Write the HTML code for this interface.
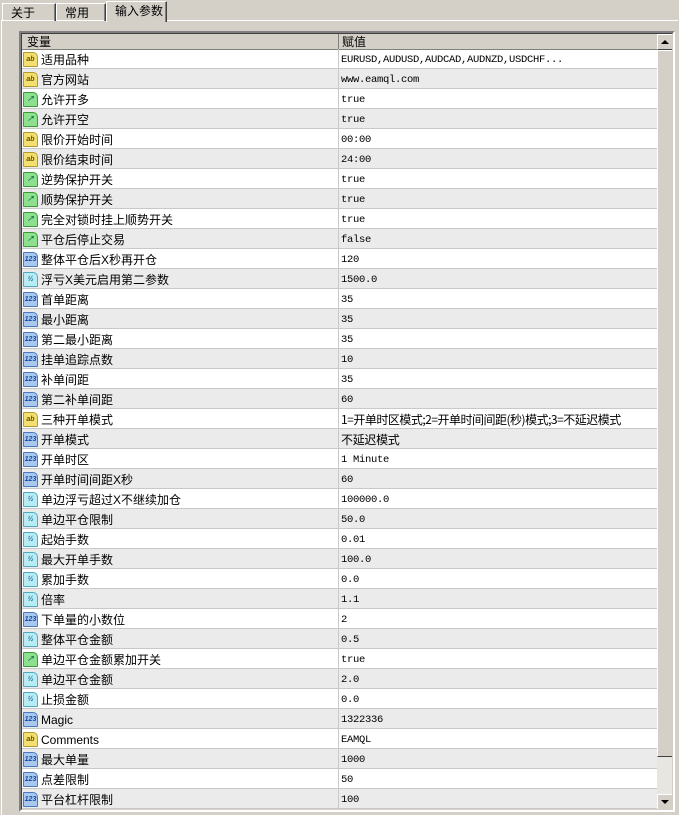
<!DOCTYPE html>
<html><head><meta charset="utf-8"><style>
*{margin:0;padding:0;box-sizing:border-box}
body{width:679px;height:815px;background:#d4d0c8;position:relative;overflow:hidden;font-family:"Liberation Sans","Noto Sans CJK SC",sans-serif}
.tab{position:absolute;top:3px;height:18px;border:1px solid #fff;border-right:1px solid #404040;border-bottom:none;font-size:12px;line-height:18px;padding-left:8px;color:#000;box-shadow:inset -1px 0 #808080}
.panel{position:absolute;left:1px;top:20px;width:677px;height:795px;border-top:1px solid #fff;border-left:1px solid #fff}
.grid{position:absolute;left:19px;top:31px;width:656px;height:781px;border:2px solid;border-color:#808080 #fff #fff #808080;background:#fff;overflow:hidden}
.grid:before{content:"";position:absolute;left:0;top:0;right:0;bottom:0;border:1px solid;border-color:#404040 #d4d0c8 #d4d0c8 #404040;pointer-events:none;z-index:2}
.hdr{position:absolute;left:1px;top:1px;width:635px;height:16px;background:#d4d0c8;font-size:12px;line-height:17px;border-bottom:1px solid #808080}
.hdr span{position:absolute;top:0}
.rows{position:absolute;left:1px;top:16px;width:635px}
.r{height:20px;position:relative;border-bottom:1px solid #c8c8c8;font-size:12px;line-height:22px}
.r:nth-child(even){background:#ebebeb}
.r .n{position:absolute;left:19px;top:0}
.r .v{position:absolute;left:319px;top:0;font-family:"Liberation Mono","Noto Sans CJK SC",monospace;font-size:10.5px;letter-spacing:-0.3px}
.r:after{content:"";position:absolute;left:316px;top:0;width:1px;height:20px;background:#c8c8c8}
.i{position:absolute;left:1px;top:3px;width:15px;height:15px;border:1px solid;font-size:7px;line-height:13px;text-align:center;font-weight:bold;border-radius:1px 5px 1px 1px}
.ab{background:#f4e070;border-color:#b09a30;color:#6a5000}
.b{background:#8ee08e;border-color:#3a9a3a;color:#064}
.n3{background:#a8c8f0;border-color:#4a78b8;color:#1848a0}
.va{background:#b8ecf4;border-color:#50a8c0;color:#1868a0}
.sb{position:absolute;left:636px;top:1px;width:16px;height:777px;background:#e8e6e0}
.btn{position:absolute;left:0;width:16px;height:16px;background:#d4d0c8;border:1px solid;border-color:#fff #404040 #404040 #fff}
.thumb{position:absolute;left:0;top:16px;width:16px;height:707px;background:#d4d0c8;border:1px solid;border-color:#fff #404040 #404040 #fff}
</style></head><body>
<div class="panel"></div>
<div class="tab" style="left:2px;width:54px">关于</div>
<div class="tab" style="left:56px;width:50px">常用</div>
<div class="tab" style="left:106px;top:1px;height:21px;width:61px;background:#d4d0c8">输入参数</div>
<div class="grid">
<div class="hdr"><span style="left:5px">变量</span><span style="left:320px">赋值</span><i style="position:absolute;left:316px;top:0;width:1px;height:15px;background:#808080"></i></div>
<div class="rows">
<div class="r"><i class="i ab">ab</i><span class="n">适用品种</span><span class="v">EURUSD,AUDUSD,AUDCAD,AUDNZD,USDCHF...</span></div>
<div class="r"><i class="i ab">ab</i><span class="n">官方网站</span><span class="v">www.eamql.com</span></div>
<div class="r"><i class="i b">↗</i><span class="n">允许开多</span><span class="v">true</span></div>
<div class="r"><i class="i b">↗</i><span class="n">允许开空</span><span class="v">true</span></div>
<div class="r"><i class="i ab">ab</i><span class="n">限价开始时间</span><span class="v">00:00</span></div>
<div class="r"><i class="i ab">ab</i><span class="n">限价结束时间</span><span class="v">24:00</span></div>
<div class="r"><i class="i b">↗</i><span class="n">逆势保护开关</span><span class="v">true</span></div>
<div class="r"><i class="i b">↗</i><span class="n">顺势保护开关</span><span class="v">true</span></div>
<div class="r"><i class="i b">↗</i><span class="n">完全对锁时挂上顺势开关</span><span class="v">true</span></div>
<div class="r"><i class="i b">↗</i><span class="n">平仓后停止交易</span><span class="v">false</span></div>
<div class="r"><i class="i n3">123</i><span class="n">整体平仓后X秒再开仓</span><span class="v">120</span></div>
<div class="r"><i class="i va">½</i><span class="n">浮亏X美元启用第二参数</span><span class="v">1500.0</span></div>
<div class="r"><i class="i n3">123</i><span class="n">首单距离</span><span class="v">35</span></div>
<div class="r"><i class="i n3">123</i><span class="n">最小距离</span><span class="v">35</span></div>
<div class="r"><i class="i n3">123</i><span class="n">第二最小距离</span><span class="v">35</span></div>
<div class="r"><i class="i n3">123</i><span class="n">挂单追踪点数</span><span class="v">10</span></div>
<div class="r"><i class="i n3">123</i><span class="n">补单间距</span><span class="v">35</span></div>
<div class="r"><i class="i n3">123</i><span class="n">第二补单间距</span><span class="v">60</span></div>
<div class="r"><i class="i ab">ab</i><span class="n">三种开单模式</span><span class="v" style="font-family:'Noto Sans CJK SC',monospace;font-size:12px;letter-spacing:-0.5px">1=开单时区模式;2=开单时间间距(秒)模式;3=不延迟模式</span></div>
<div class="r"><i class="i n3">123</i><span class="n">开单模式</span><span class="v" style="font-family:'Noto Sans CJK SC',monospace;font-size:12px">不延迟模式</span></div>
<div class="r"><i class="i n3">123</i><span class="n">开单时区</span><span class="v">1 Minute</span></div>
<div class="r"><i class="i n3">123</i><span class="n">开单时间间距X秒</span><span class="v">60</span></div>
<div class="r"><i class="i va">½</i><span class="n">单边浮亏超过X不继续加仓</span><span class="v">100000.0</span></div>
<div class="r"><i class="i va">½</i><span class="n">单边平仓限制</span><span class="v">50.0</span></div>
<div class="r"><i class="i va">½</i><span class="n">起始手数</span><span class="v">0.01</span></div>
<div class="r"><i class="i va">½</i><span class="n">最大开单手数</span><span class="v">100.0</span></div>
<div class="r"><i class="i va">½</i><span class="n">累加手数</span><span class="v">0.0</span></div>
<div class="r"><i class="i va">½</i><span class="n">倍率</span><span class="v">1.1</span></div>
<div class="r"><i class="i n3">123</i><span class="n">下单量的小数位</span><span class="v">2</span></div>
<div class="r"><i class="i va">½</i><span class="n">整体平仓金额</span><span class="v">0.5</span></div>
<div class="r"><i class="i b">↗</i><span class="n">单边平仓金额累加开关</span><span class="v">true</span></div>
<div class="r"><i class="i va">½</i><span class="n">单边平仓金额</span><span class="v">2.0</span></div>
<div class="r"><i class="i va">½</i><span class="n">止损金额</span><span class="v">0.0</span></div>
<div class="r"><i class="i n3">123</i><span class="n">Magic</span><span class="v">1322336</span></div>
<div class="r"><i class="i ab">ab</i><span class="n">Comments</span><span class="v">EAMQL</span></div>
<div class="r"><i class="i n3">123</i><span class="n">最大单量</span><span class="v">1000</span></div>
<div class="r"><i class="i n3">123</i><span class="n">点差限制</span><span class="v">50</span></div>
<div class="r"><i class="i n3">123</i><span class="n">平台杠杆限制</span><span class="v">100</span></div>
</div>
<div class="sb">
<div class="btn" style="top:0"><svg width="14" height="14"><path d="M3 9h8L7 5z" fill="#000"/></svg></div>
<div class="thumb"></div>
<div class="btn" style="top:760px"><svg width="14" height="14"><path d="M3 5h8L7 9z" fill="#000"/></svg></div>
</div>
</div>
</body></html>
